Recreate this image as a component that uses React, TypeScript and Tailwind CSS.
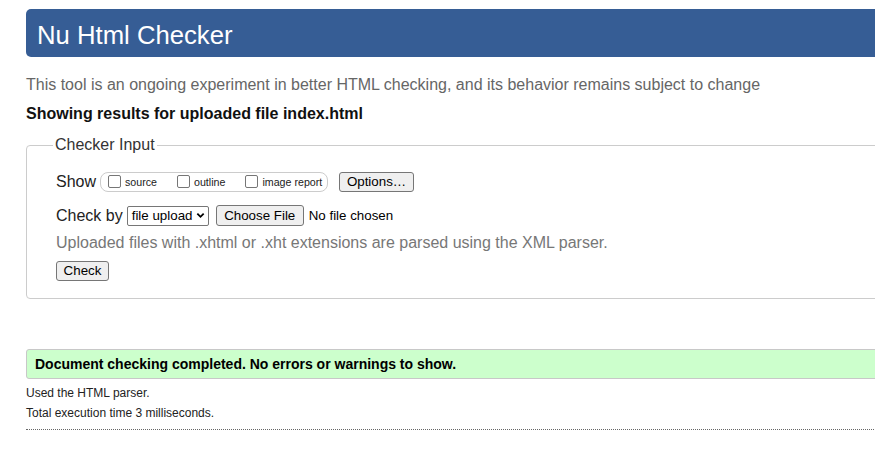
const Checkbox = () => (
  <span className="inline-block h-[13px] w-[13px] shrink-0 rounded-[2px] border border-[#767676] bg-white" />
);

const NativeButton = ({ label, width, height = "h-[20px]" }: { label: string; width: string; height?: string }) => (
  <button
    type="button"
    className={`flex ${width} ${height} shrink-0 items-center justify-center whitespace-nowrap rounded-[3px] border border-[#767676] bg-[#efefef] text-[13.33px] leading-none text-black`}
  >
    {label}
  </button>
);

const CHECKBOXES = ["source", "outline", "image report"];

export default function App() {
  return (
    <div className="min-h-screen w-full overflow-hidden bg-white font-['Liberation_Sans',Arial,sans-serif] text-[#222]">
      <div className="w-[920px] pl-[26px] pt-[9px]">
        <header className="h-[48px] rounded-l-[5px] bg-[#365d95] pl-[11px] pt-[7px]">
          <h1 className="text-[25.7px] leading-normal text-white">Nu Html Checker</h1>
        </header>

        <p className="mt-[19px] text-[16px] leading-[18px] text-[#666]">
          This tool is an ongoing experiment in better HTML checking, and its behavior remains subject to change
        </p>

        <p className="mt-[11px] text-[16px] font-bold leading-[18px] text-[#111]">
          Showing results for uploaded file index.html
        </p>

        <fieldset className="mt-[13px] rounded-[4px] border border-[#ccc] px-[26px] pb-[17px] pt-[17px]">
          <legend className="px-[2px] text-[16px] leading-[18px] text-[#333]">Checker Input</legend>

          <div className="pl-[3px]">
            <div className="flex h-[21px] items-center">
              <span className="text-[16px] leading-[18px]">Show</span>
              <div className="ml-[4px] flex h-[20px] w-[228px] shrink-0 items-center gap-[20px] whitespace-nowrap rounded-[8px] border border-[#ccc] pl-[7px] pr-[6px]">
                {CHECKBOXES.map((c) => (
                  <label key={c} className="flex shrink-0 items-center gap-[4px]">
                    <Checkbox />
                    <span className="pt-[2px] text-[10.67px] leading-none">{c}</span>
                  </label>
                ))}
              </div>
              <div className="ml-[11px]">
                <NativeButton label="Options…" width="w-[75px]" />
              </div>
            </div>

            <div className="mt-[13px] flex h-[21px] items-center">
              <span className="text-[16px] leading-[18px]">Check by</span>
              <div className="ml-[4px] flex h-[20px] w-[82px] items-center justify-between rounded-[2px] border border-[#767676] bg-white pl-[4px] pr-[2px] text-[13.33px] leading-none text-black">
                <span className="whitespace-nowrap">file upload</span>
                <svg width="9" height="9" viewBox="0 0 10 10" className="mr-[1px] shrink-0">
                  <path d="M1.5 3 L5 6.5 L8.5 3" fill="none" stroke="#000" strokeWidth="2" />
                </svg>
              </div>
              <div className="ml-[7px]">
                <NativeButton label="Choose File" width="w-[88px]" height="h-[21px]" />
              </div>
              <span className="ml-[5px] text-[13.33px] text-black">No file chosen</span>
            </div>

            <p className="mt-[8px] text-[16px] leading-[18px] text-[#777]">
              Uploaded files with .xhtml or .xht extensions are parsed using the XML parser.
            </p>

            <div className="mt-[9px]">
              <NativeButton label="Check" width="w-[53px]" />
            </div>
          </div>
        </fieldset>

        <div className="mt-[50px] flex h-[30px] items-center rounded-l-[3px] border border-[#c8c8c8] bg-[#ccffcc] pl-[8px]">
          <p className="text-[14px] font-bold text-black">Document checking completed. No errors or warnings to show.</p>
        </div>

        <div className="mt-[4px] text-[12px] leading-[20px] text-[#222]">
          <p>Used the HTML parser.</p>
          <p>Total execution time 3 milliseconds.</p>
        </div>

        <hr className="mt-[6px] border-0 border-t border-dotted border-[#666]" />
      </div>
    </div>
  );
}
